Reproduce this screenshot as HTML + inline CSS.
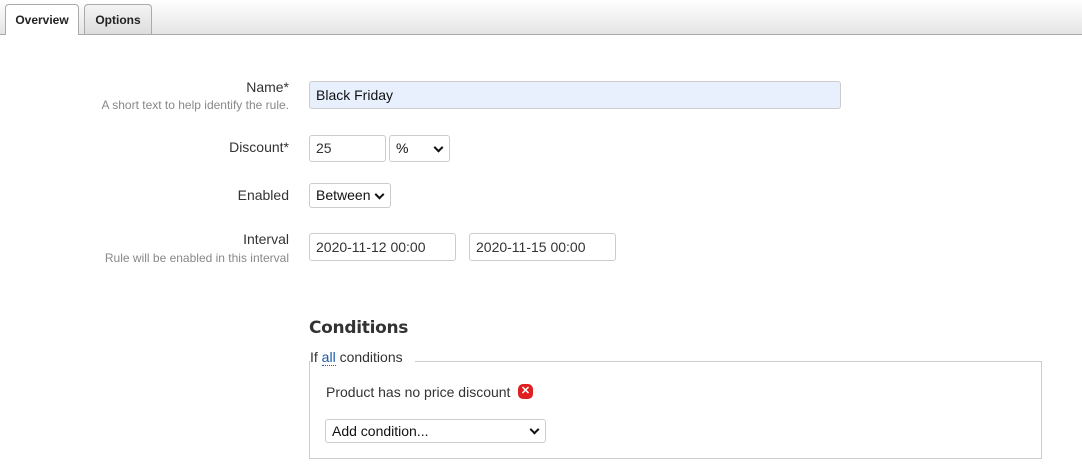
<!DOCTYPE html>
<html><head><style>
body{margin:0;width:1082px;height:475px;background:#fff;font-family:"Liberation Sans",Arial,sans-serif;position:relative;overflow:hidden;color:#333}
.a{position:absolute}
.bar{left:0;top:0;width:1082px;height:34px;background:linear-gradient(#fff,#e4e4e4);border-bottom:1px solid #aaa}
.tab{top:4px;height:30px;border:1px solid #aaa;border-bottom:none;border-radius:4px 4px 0 0;font-size:12px;font-weight:bold;color:#222;line-height:31px;text-align:center;box-sizing:border-box}
.lbl{right:793px;font-size:14px;color:#333;text-align:right;white-space:nowrap}
.hint{right:793px;font-size:12px;color:#888;white-space:nowrap}
.in{border:1px solid #ccc;border-radius:3px;box-sizing:border-box;font-size:14px;color:#333;padding-left:6px;background:#fff;white-space:nowrap}
.chev{position:absolute;right:7px;top:50%;width:5px;height:5px;border-right:2px solid #111;border-bottom:2px solid #111;transform:translateY(-70%) rotate(45deg)}
</style></head><body>
<div class="a bar"></div>
<div class="a tab" style="left:5px;width:74px;height:31px;background:#fff">Overview</div>
<div class="a tab" style="left:84px;width:68px;background:linear-gradient(#f4f4f4,#ddd)">Options</div>

<div class="a lbl" style="top:79px">Name*</div>
<div class="a hint" style="top:98px">A short text to help identify the rule.</div>
<div class="a in" style="left:309px;top:81px;width:532px;height:28px;line-height:26px;background:#e8f0fe;color:#111">Black Friday</div>

<div class="a lbl" style="top:139px">Discount*</div>
<div class="a in" style="left:309px;top:135px;width:77px;height:27px;line-height:25px">25</div>
<div class="a in" style="left:389px;top:135px;width:61px;height:27px;line-height:25px;color:#111">%<span class="chev"></span></div>

<div class="a lbl" style="top:187px">Enabled</div>
<div class="a in" style="left:309px;top:183px;width:82px;height:25px;line-height:23px;color:#111">Between<span class="chev"></span></div>

<div class="a lbl" style="top:231px">Interval</div>
<div class="a hint" style="top:251px">Rule will be enabled in this interval</div>
<div class="a in" style="left:309px;top:233px;width:147px;height:28px;line-height:26px">2020-11-12 00:00</div>
<div class="a in" style="left:469px;top:233px;width:147px;height:28px;line-height:26px">2020-11-15 00:00</div>

<div class="a" style="left:309px;top:318px;font-size:17px;font-weight:bold;color:#333;font-family:'DejaVu Sans',sans-serif;letter-spacing:-0.3px">Conditions</div>
<div class="a" style="left:309px;top:361px;width:731px;height:97px;border:1px solid #ccc;border-top:none"></div>
<div class="a" style="left:415px;top:361px;width:626px;height:1px;background:#ccc"></div>
<div class="a" style="left:310px;top:349px;font-size:14px;color:#333">If <span style="color:#1a5aa8;border-bottom:1px dotted #1a5aa8">all</span> conditions</div>
<div class="a" style="left:326px;top:384px;font-size:14px;color:#333">Product has no price discount</div>
<div class="a" style="left:518px;top:384px;width:15px;height:15px;border-radius:5px;background:#e02020;color:#fff;font-size:11px;font-weight:bold;line-height:15px;text-align:center">✕</div>
<div class="a in" style="left:325px;top:419px;width:221px;height:24px;line-height:22px;color:#111">Add condition...<span class="chev"></span></div>
</body></html>
